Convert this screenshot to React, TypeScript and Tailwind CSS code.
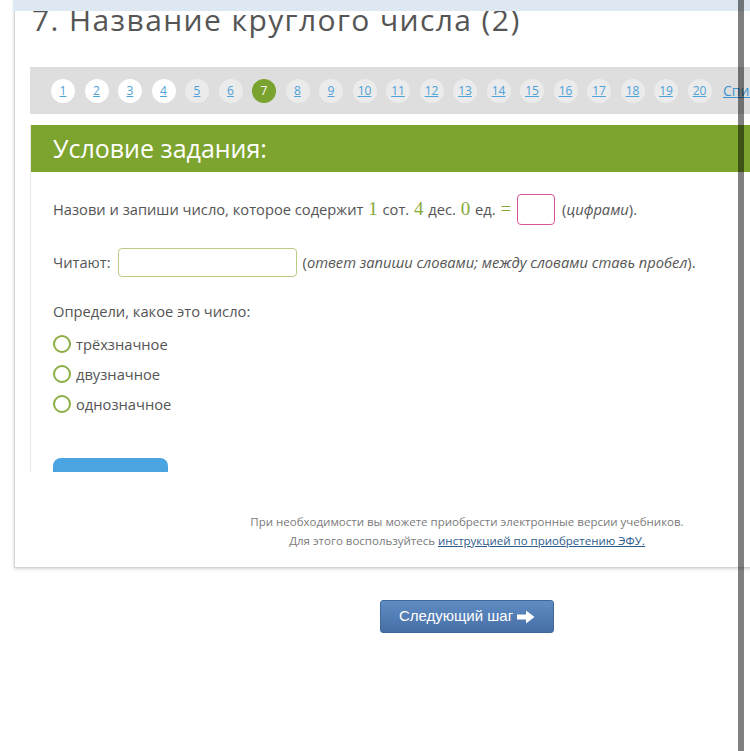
import React from "react";

const pages = Array.from({ length: 20 }, (_, i) => i + 1);
const done = [1, 2, 3, 4];
const current = 7;

const options = ["трёхзначное", "двузначное", "однозначное"];

const ArrowRight = () => (
  <svg width="18" height="14" viewBox="0 0 18 14" className="ml-[4px]">
    <path d="M0 4.5h9V0.5l8.5 6.5-8.5 6.5V9.5H0z" fill="#fff" />
  </svg>
);

const Digit = ({ children }: { children: React.ReactNode }) => (
  <span className="font-['Liberation_Serif',serif] text-[19px] text-[#87a83a] mx-[1px]">
    {children}
  </span>
);

const App = () => {
  return (
    <div className="relative w-[750px] h-[751px] overflow-hidden bg-white font-['Open_Sans',sans-serif]">
      <div className="ml-[14px] w-[906px]">
        <div className="bg-white border border-t-0 border-[#d4d4d4] shadow-[0_1px_3px_rgba(0,0,0,0.18)]">
          <h1 className="pl-[17px] pt-[1px] h-[67px] text-[30px] leading-[38px] tracking-[1.4px] text-[#555]">
            7. Название круглого числа (2)
          </h1>

          {/* step pager */}
          <div className="ml-[15px] h-[47px] bg-[#dedede] flex items-center pl-[21px] gap-[9.5px]">
            {pages.map((n) => {
              const isCurrent = n === current;
              const isDone = done.includes(n);
              return (
                <a
                  key={n}
                  className={
                    isCurrent
                      ? "w-6 h-6 shrink-0 rounded-full bg-[#79a22e] text-white text-[12px] flex items-center justify-center"
                      : isDone
                      ? "w-6 h-6 shrink-0 rounded-full bg-white text-[#4da2d8] underline text-[12px] flex items-center justify-center"
                      : "w-6 h-6 shrink-0 rounded-full bg-[#ebebeb] text-[#4da2d8] underline text-[12px] flex items-center justify-center"
                  }
                >
                  {n}
                </a>
              );
            })}
            <a className="ml-[2px] text-[14px] text-[#3d95d0] underline whitespace-nowrap">
              Список
            </a>
          </div>

          {/* task area, scrolled */}
          <div className="ml-[15px] mt-[11px] h-[347px] overflow-hidden border-l border-[#e8e8e8]">
            <div className="h-[47px] bg-[#7ca42f] text-white text-[25px] pl-[22px] flex items-center">
              Условие задания:
            </div>
            <div className="pl-[22px] text-[14.7px] text-[#555]">
              <div className="mt-[22px] h-[31px] flex items-center whitespace-nowrap">
                <span>Назови и запиши число, которое содержит&nbsp;</span>
                <Digit>1</Digit>
                <span>&nbsp;сот.&nbsp;</span>
                <Digit>4</Digit>
                <span>&nbsp;дес.&nbsp;</span>
                <Digit>0</Digit>
                <span>&nbsp;ед.&nbsp;</span>
                <Digit>=</Digit>
                <span className="ml-[5px] w-[38px] h-[31px] rounded-[4px] border border-[#d8559a]" />
                <span className="ml-[7px]">
                  (<i>цифрами</i>).
                </span>
              </div>

              <div className="mt-[23px] h-[29px] flex items-center whitespace-nowrap">
                <span>Читают:</span>
                <span className="ml-[7px] w-[179px] h-[29px] rounded-[4px] border border-[#b9cb85]" />
                <span className="ml-[6px]">
                  (<i>ответ запиши словами; между словами ставь пробел</i>).
                </span>
              </div>

              <p className="mt-[24px] leading-[20px]">Определи, какое это число:</p>

              <div className="mt-[8px]">
                {options.map((o) => (
                  <label key={o} className="h-[30px] flex items-center">
                    <span className="w-[18px] h-[18px] rounded-full border-2 border-[#8bae45]" />
                    <span className="ml-[5px]">{o}</span>
                  </label>
                ))}
              </div>

              <button className="mt-[39px] w-[115px] h-[40px] rounded-[8px] bg-[#4aa4e1] text-white text-[16px]">
                Ответить
              </button>
            </div>
          </div>

          <div className="pt-[40px] pb-[17px] text-center text-[11.5px] leading-[19px] text-[#7a7a7a]">
            <p>При необходимости вы можете приобрести электронные версии учебников.</p>
            <p>
              Для этого воспользуйтесь{" "}
              <a className="text-[#2d5c8c] underline">инструкцией по приобретению ЭФУ.</a>
            </p>
          </div>
        </div>

        <div className="mt-[32px] flex justify-center">
          <button className="h-[33px] px-[18px] flex items-center rounded-[3px] border border-[#41689c] bg-gradient-to-b from-[#5f8cc4] to-[#466fa5] text-white text-[15px] font-['Liberation_Sans_Narrow','Liberation_Sans',sans-serif]">
            Следующий шаг
            <ArrowRight />
          </button>
        </div>
      </div>

      {/* fixed header strip and scrollbar over the page */}
      <div className="absolute top-0 left-[13px] right-0 h-[11px] bg-[#dde8f2]" />
      <div className="absolute top-0 left-[738px] w-[6px] h-full bg-black/50" />
    </div>
  );
};

export default App;
